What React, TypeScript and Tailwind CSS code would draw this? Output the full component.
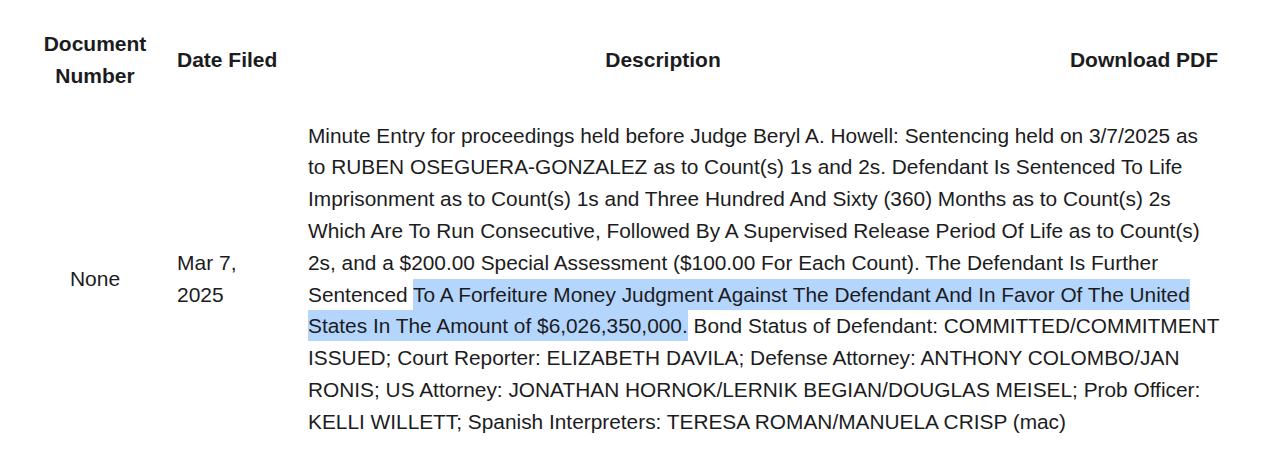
export default function App() {
  return (
    <div className="min-h-[464px] w-[1280px] bg-white pl-[28px] pt-[28px] text-[21px] leading-[31.8px] text-[#1c1c1e] [font-family:'Liberation_Sans',Arial,sans-serif]">
      <div className="grid grid-cols-[134px_146px_710px_252px] items-center font-bold">
        <div className="text-center">
          Document
          <br />
          Number
        </div>
        <div className="pl-[15px]">Date Filed</div>
        <div className="text-center">Description</div>
        <div className="text-center">Download PDF</div>
      </div>

      <div className="mt-[28px] grid grid-cols-[134px_146px_1fr] items-center">
        <div className="text-center">None</div>
        <div className="pl-[15px]">
          Mar 7,
          <br />
          2025
        </div>
        <p className="whitespace-nowrap text-[20.85px]">
          Minute Entry for proceedings held before Judge Beryl A. Howell: Sentencing held on 3/7/2025 as
          <br />
          to RUBEN OSEGUERA-GONZALEZ as to Count(s) 1s and 2s. Defendant Is Sentenced To Life
          <br />
          Imprisonment as to Count(s) 1s and Three Hundred And Sixty (360) Months as to Count(s) 2s
          <br />
          Which Are To Run Consecutive, Followed By A Supervised Release Period Of Life as to Count(s)
          <br />
          2s, and a $200.00 Special Assessment ($100.00 For Each Count). The Defendant Is Further
          <br />
          Sentenced{" "}
          <span className="bg-[#b4d5fc] py-[4px]">
            To A Forfeiture Money Judgment Against The Defendant And In Favor Of The United
            <br />
            States In The Amount of $6,026,350,000.
          </span>{" "}
          Bond Status of Defendant: COMMITTED/COMMITMENT
          <br />
          ISSUED; Court Reporter: ELIZABETH DAVILA; Defense Attorney: ANTHONY COLOMBO/JAN
          <br />
          RONIS; US Attorney: JONATHAN HORNOK/LERNIK BEGIAN/DOUGLAS MEISEL; Prob Officer:
          <br />
          KELLI WILLETT; Spanish Interpreters: TERESA ROMAN/MANUELA CRISP (mac)
        </p>
      </div>
    </div>
  );
}
